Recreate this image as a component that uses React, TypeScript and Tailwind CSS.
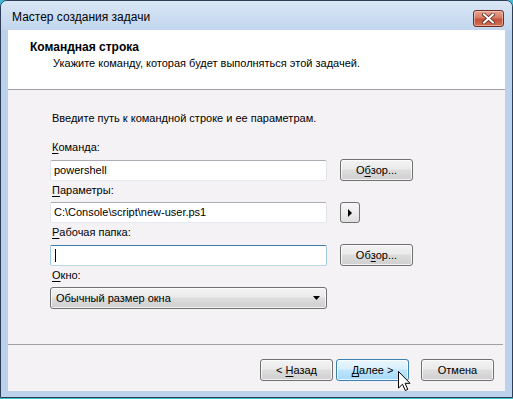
import React from 'react';

const font = "font-['Liberation_Sans',Arial,sans-serif]";

const WinButton: React.FC<{ children: React.ReactNode; primary?: boolean; className?: string }> = ({
  children,
  primary,
  className = '',
}) => (
  <div
    className={`flex h-[22px] items-center justify-center rounded-[3px] border text-[11px] text-black shadow-[inset_0_0_0_1px_rgba(255,255,255,0.75)] ${
      primary
        ? 'border-[#3c7fb1] bg-[linear-gradient(#eaf6fd_0%,#d9f0fc_45%,#bee6fd_50%,#a7d9f5_100%)]'
        : 'border-[#707070] bg-[linear-gradient(#f2f2f2_0%,#ebebeb_45%,#dddddd_50%,#cfcfcf_100%)]'
    } ${className}`}
  >
    {children}
  </div>
);

const Field: React.FC<{ children?: React.ReactNode; focused?: boolean }> = ({ children, focused }) => (
  <div
    className={`flex h-[21px] w-[277px] items-center rounded-[2px] border bg-white pl-[3px] text-[11px] text-black ${
      focused
        ? 'border-[#a4c9e3] border-t-[#3d7bad] border-b-[#b7d9ed]'
        : 'border-[#e2e3ea] border-t-[#abadb3] border-b-[#e3e9ef]'
    }`}
  >
    {children}
  </div>
);

const Label: React.FC<{ u: string; rest: string }> = ({ u, rest }) => (
  <div className="flex h-[21px] items-center pb-[2px] pl-[2px] text-[11px] text-black">
    <span className="underline underline-offset-2">{u}</span>
    {rest}
  </div>
);

export default function App() {
  return (
    <div className={`relative h-[399px] w-[513px] overflow-hidden bg-[#3fbcd4] ${font}`}>
      <div className="flex h-[398px] flex-col rounded-t-[7px] border border-[#2e3f55] bg-[#bcd2ec]">
        {/* title bar */}
        <div className="flex h-[29px] items-center rounded-t-[6px] bg-[linear-gradient(#d9e6f5,#c2d6ee)] pl-[11px] pr-[8px]">
          <span className="pt-[2px] text-[12px] text-black">Мастер создания задачи</span>
          <div className="ml-auto mt-[5px] flex h-[17px] w-[31px] items-center justify-center rounded-[3px] border border-[#6e2e26] bg-[linear-gradient(#e6a493_0%,#d77a62_45%,#c4523a_55%,#cf6f52_100%)] shadow-[inset_0_0_0_1px_rgba(255,220,210,0.5)]">
            <svg width="13" height="11" viewBox="0 0 13 11">
              <path d="M2 1.5 L11 9.5 M11 1.5 L2 9.5" stroke="#5a2a22" strokeWidth="3.6" strokeLinecap="square" />
              <path d="M2 1.5 L11 9.5 M11 1.5 L2 9.5" stroke="#ffffff" strokeWidth="2" strokeLinecap="square" />
            </svg>
          </div>
        </div>

        {/* client area */}
        <div className="mx-[7px] flex h-[361px] flex-col">
          <div className="flex h-[59px] flex-col bg-white pl-[22px] pt-[10px] text-black">
            <div className="text-[12px] font-bold leading-[14px]">Командная строка</div>
            <div className="pl-[23px] pt-[2px] text-[11px] leading-[14px]">
              Укажите команду, которая будет выполняться этой задачей.
            </div>
          </div>
          <div className="h-px bg-[#a0a0a0]" />

          <div className="flex flex-1 flex-col bg-[#f5f2f5]">
            <div className="flex flex-col pl-[42px] pt-[21px]">
              <div className="pl-[2px] text-[11px] leading-[14px] text-black">
                Введите путь к командной строке и ее параметрам.
              </div>

              <div className="mt-[13px]">
                <Label u="К" rest="оманда:" />
                <div className="flex items-end gap-[13px]">
                  <Field>powershell</Field>
                  <WinButton className="w-[73px]">
                    О<span className="underline underline-offset-2">б</span>зор...
                  </WinButton>
                </div>
              </div>

              <div>
                <Label u="П" rest="араметры:" />
                <div className="flex items-end gap-[13px]">
                  <Field>C:\Console\script\new-user.ps1</Field>
                  <div className="flex h-[21px] w-[20px] items-center justify-center rounded-[3px] border border-[#707070] bg-[linear-gradient(#f7f7f7,#ededed_50%,#dedede)]">
                    <svg width="5" height="8" viewBox="0 0 5 8">
                      <path d="M0 0 L4 4 L0 8 Z" fill="#000" />
                    </svg>
                  </div>
                </div>
              </div>

              <div>
                <Label u="Р" rest="абочая папка:" />
                <div className="flex items-end gap-[13px]">
                  <Field focused>
                    <div className="ml-[1px] h-[13px] w-px bg-black" />
                  </Field>
                  <WinButton className="w-[73px]">
                    Об<span className="underline underline-offset-2">з</span>ор...
                  </WinButton>
                </div>
              </div>

              <div>
                <Label u="О" rest="кно:" />
                <div className="flex h-[22px] w-[277px] items-center rounded-[3px] border border-[#707070] bg-[linear-gradient(#f2f2f2_0%,#ebebeb_45%,#dddddd_50%,#cfcfcf_100%)] pl-[5px] pr-[6px] text-[11px] text-black shadow-[inset_0_0_0_1px_rgba(255,255,255,0.75)]">
                  <span>Обычный размер окна</span>
                  <svg className="ml-auto" width="7" height="4" viewBox="0 0 7 4">
                    <path d="M0 0 L7 0 L3.5 4 Z" fill="#000" />
                  </svg>
                </div>
              </div>
            </div>

            <div className="mt-auto">
              <div className="mr-[2px] h-px bg-[#a0a0a0]" />
              <div className="flex justify-end pb-[10px] pr-[11px] pt-[14px]">
                <WinButton className="w-[73px]">
                  &lt; <span className="ml-[3px] underline underline-offset-2">Н</span>азад
                </WinButton>
                <WinButton primary className="ml-[3px] w-[73px]">
                  <span className="underline underline-offset-2">Д</span>алее &gt;
                </WinButton>
                <WinButton className="ml-[12px] w-[73px]">Отмена</WinButton>
              </div>
            </div>
          </div>
        </div>
      </div>

      {/* mouse pointer */}
      <svg className="absolute left-[398px] top-[371px]" width="13" height="21" viewBox="0 0 13 21">
        <path
          d="M0.5 0.5 L0.5 17 L4.5 13.2 L7.3 19.5 L9.8 18.4 L7.1 12.3 L12 12.3 Z"
          fill="#ffffff"
          stroke="#000000"
          strokeWidth="1"
          strokeLinejoin="miter"
        />
      </svg>
    </div>
  );
}
